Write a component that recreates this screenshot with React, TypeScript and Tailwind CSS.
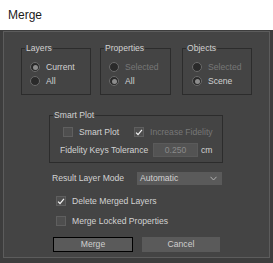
import React from 'react';

type Opt = { label: string; checked?: boolean; disabled?: boolean };

function Radio({ label, checked, disabled }: Opt) {
  return (
    <div className="flex h-[14px] items-center">
      <span className="flex h-[10px] w-[10px] items-center justify-center rounded-full border border-[#6a6a6a] bg-[#2a2a2a]">
        {checked && <span className="h-[5px] w-[5px] rounded-full bg-[#8c8c8c]" />}
      </span>
      <span className={`ml-[6px] ${disabled ? 'text-[#777]' : 'text-[#d2d2d2]'}`}>{label}</span>
    </div>
  );
}

function Check({ label, checked, disabled }: Opt) {
  return (
    <div className="flex h-[14px] items-center">
      <span className="flex h-[10px] w-[10px] items-center justify-center border border-[#5f5f5f] bg-[#4e4e4e]">
        {checked && (
          <svg width="9" height="9" viewBox="0 0 9 9" fill="none">
            <path d="M1.2 4.6 L3.4 6.8 L7.8 1.6" stroke="#f2f2f2" strokeWidth="1.4" />
          </svg>
        )}
      </span>
      <span className={`ml-[6px] ${disabled ? 'text-[#777]' : 'text-[#d2d2d2]'}`}>{label}</span>
    </div>
  );
}

function Group({ title, className, children }: { title: string; className: string; children: React.ReactNode }) {
  return (
    <fieldset className={`border border-[#2c2c2c] ${className}`}>
      <legend className="ml-[3px] px-[1px] leading-[11px] text-[#d2d2d2]">{title}</legend>
      {children}
    </fieldset>
  );
}

export default function App() {
  return (
    <div className="flex h-[263px] w-[273px] flex-col bg-[#3d3d3d] font-['Liberation_Sans',Arial,sans-serif] text-[8.6px]">
      <div className="flex h-[30px] items-center bg-white pl-[8px] text-[12px] text-[#1b1b1b]">Merge</div>
      <div className="px-[3px] pt-[1px]">
        <div className="flex h-[227px] flex-col border border-[#5c5c5c] bg-[#444444]">
          {/* option groups */}
          <div className="mt-[11px] flex pl-[17px]">
            <Group title="Layers" className="w-[70px] pb-[6px] pt-[6px]">
              <div className="pl-[8px]">
                <Radio label="Current" checked />
                <Radio label="All" />
              </div>
            </Group>
            <Group title="Properties" className="ml-[9px] w-[71px] pb-[6px] pt-[6px]">
              <div className="pl-[8px]">
                <Radio label="Selected" disabled />
                <Radio label="All" checked />
              </div>
            </Group>
            <Group title="Objects" className="ml-[11px] w-[70px] pb-[6px] pt-[6px]">
              <div className="pl-[9px]">
                <Radio label="Selected" disabled />
                <Radio label="Scene" checked />
              </div>
            </Group>
          </div>

          <Group title="Smart Plot" className="ml-[45px] mt-[15px] w-[174px] pb-[5px] pt-[4px]">
            <div className="flex pl-[13px]">
              <div className="w-[71px]">
                <Check label="Smart Plot" />
              </div>
              <Check label="Increase Fidelity" checked disabled />
            </div>
            <div className="mt-[4px] flex h-[14px] items-center pl-[10px] text-[#d2d2d2]">
              <span className="w-[93px]">Fidelity Keys Tolerance</span>
              <div className="flex h-[14px] w-[45px] items-center justify-center border border-[#5a5a5a] bg-[#535353] text-[#8a8a8a]">
                0.250
              </div>
              <span className="ml-[3px]">cm</span>
            </div>
          </Group>

          <div className="ml-[48px] mt-[9px] flex h-[13px] items-center text-[#d2d2d2]">
            <span className="w-[85px]">Result Layer Mode</span>
            <div className="flex h-[13px] w-[85px] items-center justify-between bg-[#5a5a5a] pl-[3px] pr-[5px]">
              <span>Automatic</span>
              <svg width="7" height="5" viewBox="0 0 7 5">
                <path d="M0.5 0.8 L3.5 4 L6.5 0.8" fill="none" stroke="#b0b0b0" strokeWidth="1" />
              </svg>
            </div>
          </div>

          <div className="ml-[52px] mt-[9px] flex flex-col gap-[6px]">
            <Check label="Delete Merged Layers" checked />
            <Check label="Merge Locked Properties" />
          </div>

          <div className="ml-[49px] mt-[9px] flex gap-[9px] text-[#cfcfcf]">
            <button className="flex h-[15px] w-[80px] items-center justify-center border border-black bg-[#5a5a5a]">Merge</button>
            <button className="flex h-[15px] w-[78px] items-center justify-center bg-[#5a5a5a]">Cancel</button>
          </div>
        </div>
      </div>
    </div>
  );
}
